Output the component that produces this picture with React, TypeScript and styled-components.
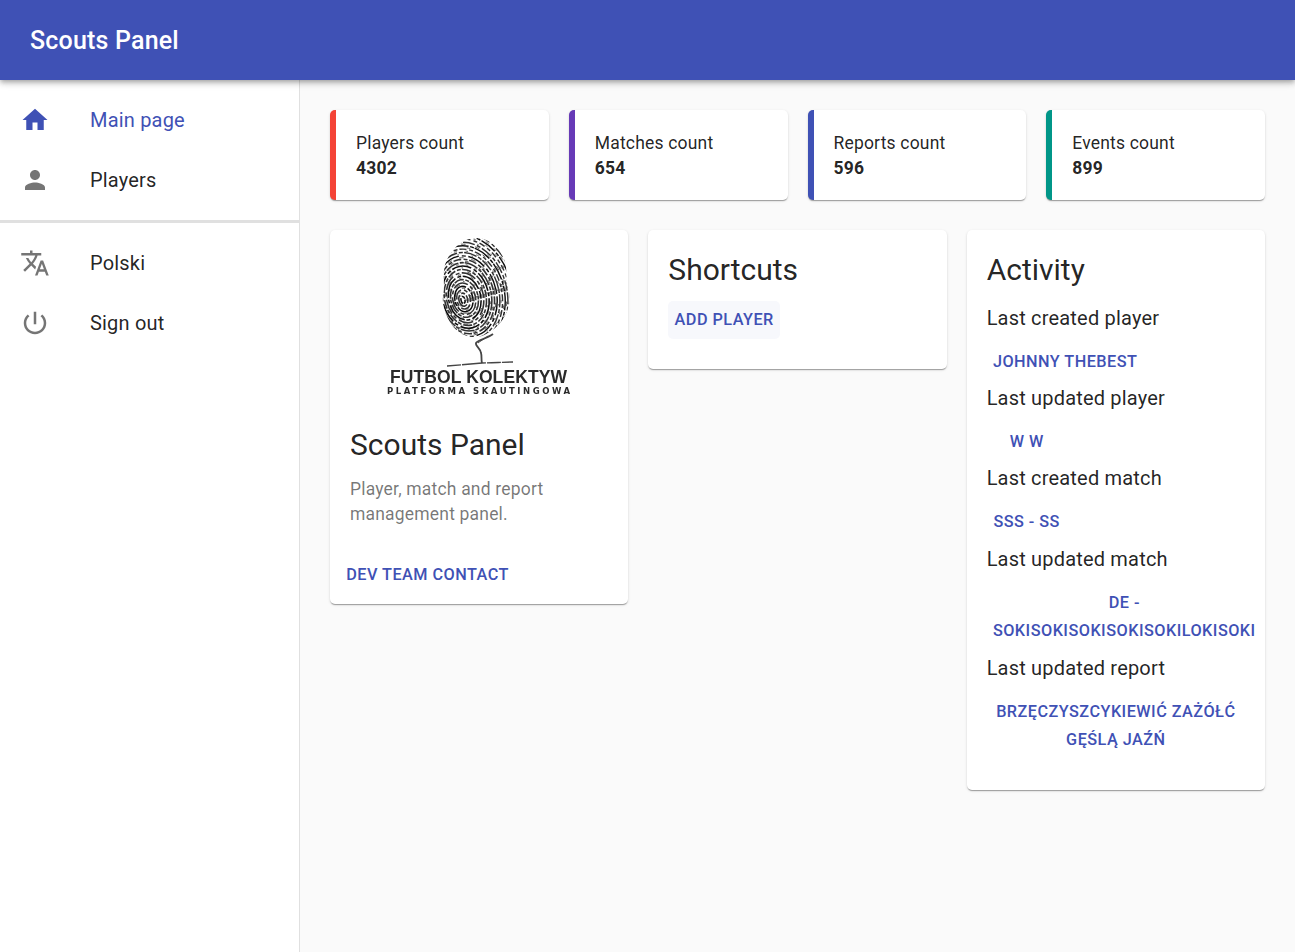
import React from "react";
import styled, { createGlobalStyle } from "styled-components";

const Global = createGlobalStyle`
  html, body { margin: 0; padding: 0; height: 100%; background: #fafafa; }
  body { font-family: Roboto, "Liberation Sans", sans-serif; color: rgba(0,0,0,0.87); }
  * { box-sizing: border-box; }
`;

const Page = styled.div`
  display: flex;
  flex-direction: column;
  height: 952px;
  overflow: hidden;
`;
const AppBar = styled.header`
  height: 80px;
  flex: none;
  background: #3f51b5;
  color: #fff;
  display: flex;
  align-items: center;
  padding: 2px 30px 0;
  position: relative;
  z-index: 2;
  box-shadow: 0px 2px 4px -1px rgba(0,0,0,0.2), 0px 4px 5px 0px rgba(0,0,0,0.14), 0px 1px 10px 0px rgba(0,0,0,0.12);
`;
const AppTitle = styled.h1`
  margin: 0;
  font-size: 25px;
  font-weight: 500;
  line-height: 1.6;
  letter-spacing: 0.1875px;
`;
const Body = styled.div`
  flex: 1;
  display: flex;
  min-height: 0;
`;
const Sidebar = styled.nav`
  width: 300px;
  flex: none;
  background: #fff;
  border-right: 1px solid rgba(0,0,0,0.12);
`;
const NavList = styled.ul`
  list-style: none;
  margin: 0;
  padding: 10px 0;
`;
const NavItem = styled.li`
  height: 60px;
  display: flex;
  align-items: center;
  padding: 0 20px;
`;
const NavIcon = styled.span<{ $active?: boolean }>`
  width: 70px;
  flex: none;
  display: flex;
  color: ${(p) => (p.$active ? "#3f51b5" : "rgba(0,0,0,0.54)")};
`;
const NavText = styled.span<{ $active?: boolean }>`
  font-size: 20px;
  line-height: 1.5;
  letter-spacing: 0.1875px;
  color: ${(p) => (p.$active ? "#3f51b5" : "rgba(0,0,0,0.87)")};
`;
const Divider = styled.hr`
  margin: 0;
  border: 0;
  height: 3px;
  background: #e0e0e0;
`;
const Main = styled.main`
  flex: 1;
  padding: 30px;
  min-width: 0;
  display: flex;
  flex-direction: column;
  gap: 30px;
`;
const StatsRow = styled.section`
  display: grid;
  grid-template-columns: repeat(4, minmax(0, 1fr));
  gap: 20px;
`;
const paper = `
  background: #fff;
  border-radius: 5px;
  box-shadow: 0px 2px 1px -1px rgba(0,0,0,0.2), 0px 1px 1px 0px rgba(0,0,0,0.14), 0px 1px 3px 0px rgba(0,0,0,0.12);
`;
const StatCard = styled.article<{ $color: string }>`
  ${paper}
  height: 90px;
  border-left: 6px solid ${(p) => p.$color};
  padding: 21px 20px 0;
  font-size: 17.5px;
  line-height: 25px;
  letter-spacing: 0.1875px;
`;
const StatValue = styled.div`
  font-weight: 700;
`;
const Columns = styled.section`
  display: grid;
  grid-template-columns: repeat(3, minmax(0, 1fr));
  gap: 20px;
  align-items: start;
`;
const Card = styled.article`
  ${paper}
`;
const LogoBox = styled.div`
  height: 175px;
  display: flex;
  justify-content: center;
`;
const CardBody = styled.div`
  padding: 20px;
`;
const CardTitle = styled.h2`
  margin: 0;
  font-size: 30px;
  font-weight: 400;
  line-height: 40px;
`;
const IntroTitle = styled(CardTitle)`
  margin-bottom: 11.5px;
`;
const Muted = styled.p`
  margin: 0;
  font-size: 17.5px;
  line-height: 25px;
  letter-spacing: 0.1875px;
  color: rgba(0,0,0,0.54);
`;
const CardActions = styled.div`
  padding: 9.5px 10px 10px;
`;
const TextButton = styled.div<{ $tinted?: boolean }>`
  display: flex;
  justify-content: center;
  text-align: center;
  width: fit-content;
  min-width: 80px;
  padding: 5px 6.25px;
  border-radius: 5px;
  font-size: 16.25px;
  font-weight: 500;
  line-height: 1.75;
  letter-spacing: 0.464px;
  text-transform: uppercase;
  color: #3f51b5;
  background: ${(p) => (p.$tinted ? "rgba(63,81,181,0.04)" : "transparent")};
`;
const ShortcutBody = styled.div`
  padding: 20px 20px 30px;
  min-height: 139px;
`;
const ShortcutButton = styled(TextButton)`
  margin-top: 11px;
`;
const ActivityBody = styled.div`
  padding: 20px 20px 28px;
`;
const ActivityList = styled.div`
  margin-top: 12.6px;
`;
const ActivityLabel = styled.div`
  font-size: 20px;
  line-height: 30px;
  letter-spacing: 0.1875px;
`;
const ActivityButtonRow = styled.div`
  padding: 10px 0 2px;
`;

const stats = [
  { label: "Players count", value: "4302", color: "#f44336" },
  { label: "Matches count", value: "654", color: "#673ab7" },
  { label: "Reports count", value: "596", color: "#3f51b5" },
  { label: "Events count", value: "899", color: "#009688" },
];

const activity = [
  { label: "Last created player", link: "Johnny Thebest" },
  { label: "Last updated player", link: "W W" },
  { label: "Last created match", link: "sss - ss" },
  { label: "Last updated match", link: "de - sokisokisokisokisokilokisoki" },
  { label: "Last updated report", link: "Brzęczyszcykiewić Zażółć Gęślą Jaźń" },
];

const Ic = ({ d }: { d: string }) => (
  <svg width="30" height="30" viewBox="0 0 24 24" fill="currentColor"><path d={d} /></svg>
);

const Logo = () => {
  const ridges = [];
  for (let i = 0; i < 30; i++) {
    const rx = 2 + i * 2.35;
    const ry = 3.5 + i * 3.1;
    const a = 4 + ((i * 13) % 13);
    const b = 0.9 + ((i * 7) % 5) * 0.4;
    const c = 6 + ((i * 11) % 17);
    const props = {
      cx: 133 + i * 0.35,
      cy: 70 - i * 0.25,
      rx,
      ry,
      fill: "none",
      transform: "rotate(-12 133 70)",
    };
    ridges.push(
      <ellipse
        key={i}
        {...props}
        stroke={i % 3 === 0 ? "#111" : "#333"}
        strokeWidth={i < 12 ? 1.6 : 1.45}
        strokeDasharray={`${a} ${b} ${c} ${b + 0.6}`}
      />
    );
    ridges.push(
      <ellipse
        key={`s${i}`}
        {...props}
        rx={rx + 1.2}
        ry={ry + 1.6}
        stroke="#444"
        strokeWidth={0.8}
        strokeDasharray={`${1.5 + (i % 4)} ${7 + ((i * 5) % 9)}`}
      />
    );
  }
  return (
    <svg width="298" height="175" viewBox="0 0 298 175">
      <defs>
        <clipPath id="print">
          <path d="M146 8c13 0 24 9 29 24 2 7 1 14 2 21 1 7 4 13 2 22-3 14-14 26-27 31-8 2-16 1-23-4-8-6-12-14-15-24-2-8-1-14 0-21 0-8-1-14 1-22 5-16 18-27 31-27z" />
        </clipPath>
        <filter id="soft" x="-5%" y="-5%" width="110%" height="110%">
          <feGaussianBlur stdDeviation="0.4" />
        </filter>
      </defs>
      <g clipPath="url(#print)" filter="url(#soft)">{ridges}</g>
      <g filter="url(#soft)" fill="none" stroke="#444">
        <path d="M163 104c-5 4-15 6-17 9-1 3 5 6 5 10 1 3 0 7 1 10" strokeWidth="1.8" />
        <path d="M158 106c-3 3-8 5-10 7" strokeWidth="1" />
        <path d="M117 136c12-1 24-2 35-3 11 0 21-1 31-1" strokeWidth="1.3" strokeDasharray="14 1 24 1" />
      </g>
      <g filter="url(#soft)">
        <text
          x="148.5"
          y="153"
          textAnchor="middle"
          fontFamily="'Liberation Sans', sans-serif"
          fontWeight="700"
          fontSize="17.5"
          fill="#2a2a2a"
          textLength="177"
          lengthAdjust="spacing"
        >
          FUTBOL KOLEKTYW
        </text>
        <text
          x="148.5"
          y="164"
          textAnchor="middle"
          fontFamily="'DejaVu Sans', sans-serif"
          fontWeight="700"
          fontSize="8.5"
          fill="#2a2a2a"
          textLength="183"
          lengthAdjust="spacing"
        >
          PLATFORMA SKAUTINGOWA
        </text>
      </g>
    </svg>
  );
};

export default function App() {
  return (
    <Page>
      <Global />
      <AppBar><AppTitle>Scouts Panel</AppTitle></AppBar>
      <Body>
        <Sidebar>
          <NavList>
            <NavItem>
              <NavIcon $active><Ic d="M10 20v-6h4v6h5v-8h3L12 3 2 12h3v8z" /></NavIcon>
              <NavText $active>Main page</NavText>
            </NavItem>
            <NavItem>
              <NavIcon><Ic d="M12 12c2.21 0 4-1.79 4-4s-1.79-4-4-4-4 1.79-4 4 1.79 4 4 4zm0 2c-2.67 0-8 1.34-8 4v2h16v-2c0-2.66-5.33-4-8-4z" /></NavIcon>
              <NavText>Players</NavText>
            </NavItem>
          </NavList>
          <Divider />
          <NavList>
            <NavItem>
              <NavIcon><Ic d="M12.87 15.07l-2.54-2.51.03-.03c1.74-1.94 2.98-4.17 3.71-6.53H17V4h-7V2H8v2H1v1.99h11.17C11.5 7.92 10.44 9.75 9 11.35 8.07 10.32 7.3 9.19 6.69 8h-2c.73 1.63 1.73 3.17 2.98 4.56l-5.09 5.02L4 19l5-5 3.11 3.11.76-2.04zM18.5 10h-2L12 22h2l1.12-3h4.75L21 22h2l-4.5-12zm-2.62 7l1.62-4.33L19.12 17h-3.24z" /></NavIcon>
              <NavText>Polski</NavText>
            </NavItem>
            <NavItem>
              <NavIcon><Ic d="M13 3h-2v10h2V3zm4.83 2.17l-1.42 1.42C17.99 7.86 19 9.81 19 12c0 3.87-3.13 7-7 7s-7-3.13-7-7c0-2.19 1.01-4.14 2.58-5.42L6.17 5.17C4.23 6.82 3 9.26 3 12c0 4.97 4.03 9 9 9s9-4.03 9-9c0-2.74-1.23-5.18-3.17-6.83z" /></NavIcon>
              <NavText>Sign out</NavText>
            </NavItem>
          </NavList>
        </Sidebar>
        <Main>
          <StatsRow>
            {stats.map((s) => (
              <StatCard key={s.label} $color={s.color}>
                <div>{s.label}</div>
                <StatValue>{s.value}</StatValue>
              </StatCard>
            ))}
          </StatsRow>
          <Columns>
            <Card>
              <LogoBox><Logo /></LogoBox>
              <CardBody>
                <IntroTitle>Scouts Panel</IntroTitle>
                <Muted>Player, match and report management panel.</Muted>
              </CardBody>
              <CardActions>
                <TextButton>Dev team contact</TextButton>
              </CardActions>
            </Card>
            <Card>
              <ShortcutBody>
                <CardTitle>Shortcuts</CardTitle>
                <ShortcutButton $tinted>Add player</ShortcutButton>
              </ShortcutBody>
            </Card>
            <Card>
              <ActivityBody>
                <CardTitle>Activity</CardTitle>
                <ActivityList>
                  {activity.map((a) => (
                    <React.Fragment key={a.label}>
                      <ActivityLabel>{a.label}</ActivityLabel>
                      <ActivityButtonRow>
                        <TextButton>{a.link}</TextButton>
                      </ActivityButtonRow>
                    </React.Fragment>
                  ))}
                </ActivityList>
              </ActivityBody>
            </Card>
          </Columns>
        </Main>
      </Body>
    </Page>
  );
}
